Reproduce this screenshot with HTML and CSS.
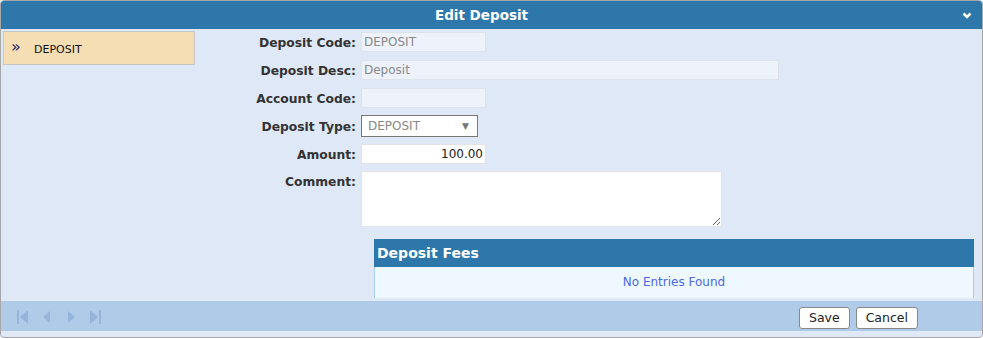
FILE: index.html
```html
<!DOCTYPE html>
<html lang="en">

<head>
    <meta charset="UTF-8">
    <title>Edit Deposit</title>
    <link rel="stylesheet" href="styles.css">
</head>

<body>

    <div class="panel">
        <div class="panel-header">
            <span class="panel-title">Edit Deposit</span>
            <svg class="collapse" width="10" height="8" viewBox="0 0 10 8">
                <path d="M1.5 1.5 L5 5 L8.5 1.5" fill="none" stroke="#fff" stroke-width="2.6"/>
            </svg>
        </div>

        <div class="panel-body">
            <div class="sidebar">
                <div class="side-item">
                    <span class="arrows">&raquo;</span>
                    <span>DEPOSIT</span>
                </div>
            </div>

            <div class="content">
                <div class="form">
                    <label>Deposit Code:</label>
                    <div><input class="field short readonly" value="DEPOSIT" readonly></div>

                    <label>Deposit Desc:</label>
                    <div><input class="field long readonly" value="Deposit" readonly></div>

                    <label>Account Code:</label>
                    <div><input class="field short readonly" value="" readonly></div>

                    <label>Deposit Type:</label>
                    <div>
                        <div class="select">
                            <span>DEPOSIT</span>
                            <span class="caret">&#9660;</span>
                        </div>
                    </div>

                    <label>Amount:</label>
                    <div><input class="field short amount" value="100.00"></div>

                    <label>Comment:</label>
                    <div><textarea class="comment"></textarea></div>
                </div>

                <div class="fees">
                    <div class="fees-header">Deposit Fees</div>
                    <div class="fees-body">No Entries Found</div>
                </div>
            </div>
        </div>

        <div class="footer">
            <div class="nav">
                <svg width="14" height="16" viewBox="0 0 14 16"><rect x="1" y="1" width="2" height="14" fill="#97b5dc"/><path d="M12 1 L4 8 L12 15 Z" fill="#97b5dc"/></svg>
                <svg width="14" height="16" viewBox="0 0 14 16"><path d="M10 2 L3 8 L10 14 Z" fill="#97b5dc"/></svg>
                <svg width="14" height="16" viewBox="0 0 14 16"><path d="M4 2 L11 8 L4 14 Z" fill="#97b5dc"/></svg>
                <svg width="14" height="16" viewBox="0 0 14 16"><path d="M2 1 L10 8 L2 15 Z" fill="#97b5dc"/><rect x="11" y="1" width="2" height="14" fill="#97b5dc"/></svg>
            </div>
            <div class="buttons">
                <button>Save</button>
                <button>Cancel</button>
            </div>
        </div>
        <div class="bottom-strip"></div>
    </div>

</body>

</html>
```

FILE: styles.css
```css
body {
    margin: 0;
    font-family: "DejaVu Sans", Verdana, sans-serif;
    font-size: 13px;
    background: #fff;
}

.panel {
    width: 981px;
    height: 336px;
    border: 1px solid #a7a7a7;
    border-radius: 4px;
    background: #dfe8f6;
    display: flex;
    flex-direction: column;
    overflow: hidden;
}

.panel-header {
    height: 28px;
    background: #2e77aa;
    display: flex;
    align-items: center;
    justify-content: center;
    padding-right: 20px;
    position: relative;
}

.panel-title {
    color: #fff;
    font-weight: bold;
    font-size: 13.5px;
}

.collapse {
    position: absolute;
    right: 10px;
    top: 11px;
}

.panel-body {
    display: flex;
}

.sidebar {
    width: 192px;
    padding: 2px 0 0 2px;
}

.side-item {
    height: 32px;
    background: #f5deb3;
    border: 1px solid #c5c5c5;
    display: flex;
    align-items: center;
    font-size: 11px;
    color: #111;
    padding-top: 2px;
    box-sizing: border-box;
    height: 34px;
}

.arrows {
    width: 30px;
    padding-left: 7px;
    box-sizing: border-box;
    font-size: 16px;
    color: #1e2a6a;
    margin-top: -5px;
}

.content {
    flex: 1;
}

.form {
    display: grid;
    grid-template-columns: 161px 1fr;
    grid-auto-rows: 28px;
    column-gap: 5px;
}

.form label {
    text-align: right;
    font-weight: bold;
    color: #333;
    font-size: 12.3px;
    line-height: 28px;
}

.field {
    box-sizing: border-box;
    height: 20px;
    margin-top: 3px;
    padding: 0 2px;
    border: 1px solid #dde3ec;
    font-family: inherit;
    font-size: 12px;
    display: block;
}

.short {
    width: 125px;
}

.long {
    width: 418px;
}

.readonly {
    background: #eef3fb;
    color: #888;
}

.amount {
    background: #fff;
    border-color: #e3e3e3;
    text-align: right;
    color: #222;
}

.select {
    box-sizing: border-box;
    width: 117px;
    height: 22px;
    margin-top: 2px;
    border: 1px solid #777;
    background: #fff;
    color: #888;
    font-size: 12px;
    display: flex;
    align-items: center;
    justify-content: space-between;
    padding: 0 8px 0 6px;
}

.caret {
    font-size: 9px;
    color: #777;
}

.comment {
    box-sizing: border-box;
    width: 361px;
    height: 56px;
    margin-top: 2px;
    border: 1px solid #e3e3e3;
    display: block;
}

.form label:nth-last-of-type(1) {
    line-height: 26px;
}

.fees {
    margin: 42px 8px 0 179px;
}

.fees-header {
    height: 28px;
    background: #2e77aa;
    color: #fff;
    font-weight: bold;
    font-size: 14px;
    line-height: 28px;
    padding-left: 3px;
}

.fees-body {
    height: 31px;
    background: #f0f8ff;
    border-left: 1px solid #a9cfee;
    border-right: 1px solid #a9cfee;
    color: #4a68e0;
    font-size: 12px;
    text-align: center;
    line-height: 30px;
}

.footer {
    height: 30px;
    background: #b0cbe7;
    display: flex;
    align-items: center;
    justify-content: space-between;
    margin-top: 3px;
}

.nav {
    display: flex;
    gap: 10px;
    padding-left: 15px;
    padding-top: 2px;
}

.buttons {
    display: flex;
    gap: 6px;
    padding-right: 64px;
    padding-top: 3px;
}

button {
    height: 22px;
    background: #fff;
    border: 1px solid #888;
    border-radius: 3px;
    font-family: inherit;
    font-size: 12.5px;
    color: #222;
    padding: 0 9px;
}

.bottom-strip {
    height: 5px;
}
```
